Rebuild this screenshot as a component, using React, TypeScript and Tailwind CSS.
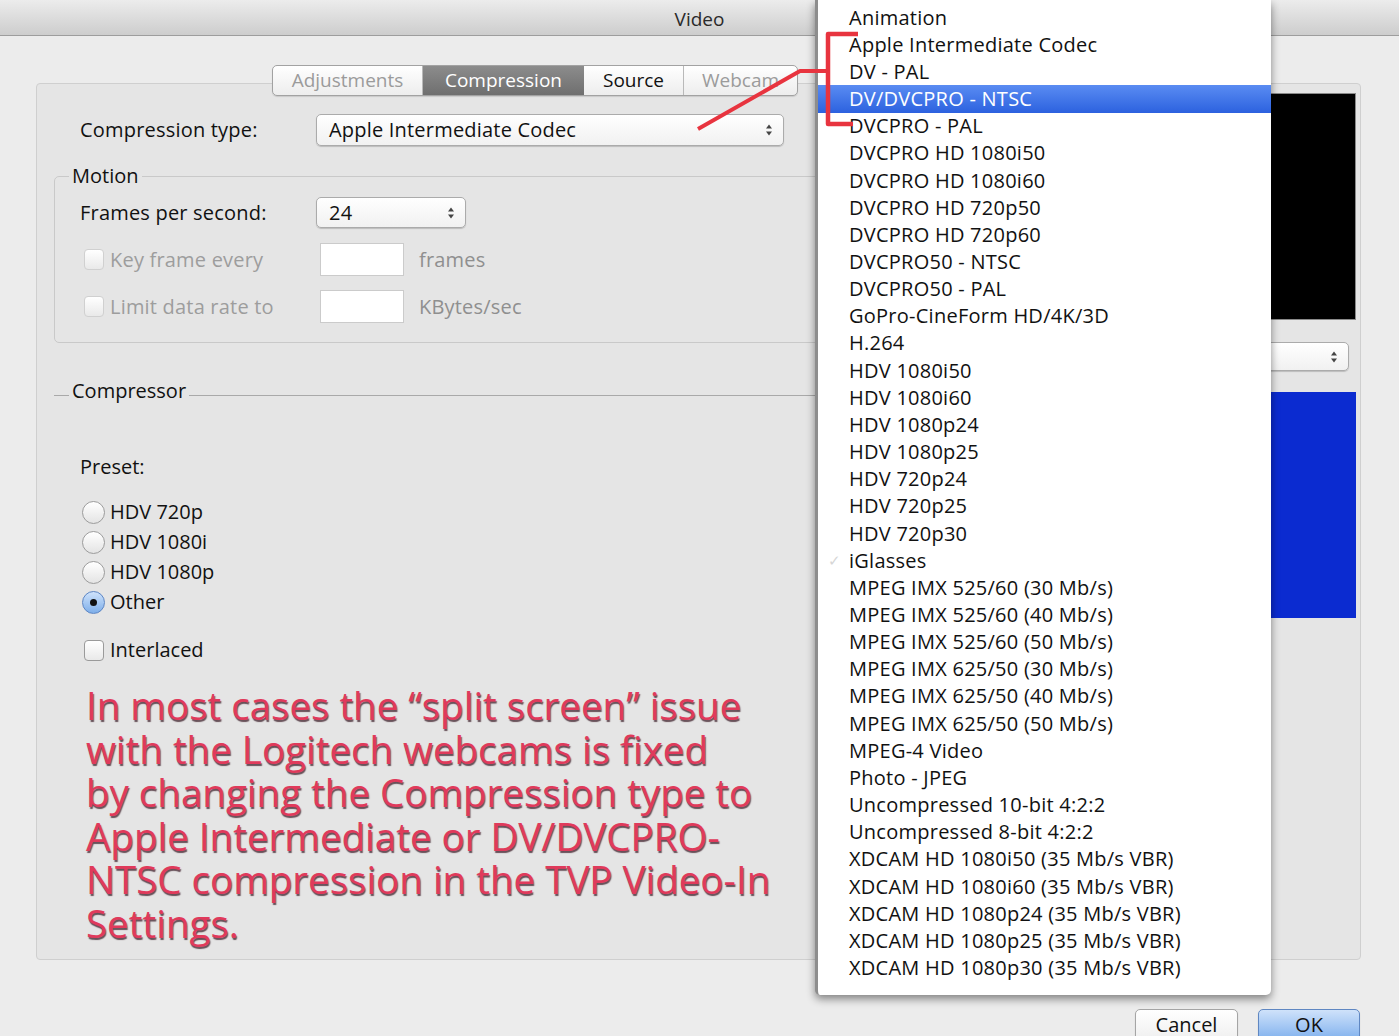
const codecs = [
  "Animation",
  "Apple Intermediate Codec",
  "DV - PAL",
  "DV/DVCPRO - NTSC",
  "DVCPRO - PAL",
  "DVCPRO HD 1080i50",
  "DVCPRO HD 1080i60",
  "DVCPRO HD 720p50",
  "DVCPRO HD 720p60",
  "DVCPRO50 - NTSC",
  "DVCPRO50 - PAL",
  "GoPro-CineForm HD/4K/3D",
  "H.264",
  "HDV 1080i50",
  "HDV 1080i60",
  "HDV 1080p24",
  "HDV 1080p25",
  "HDV 720p24",
  "HDV 720p25",
  "HDV 720p30",
  "iGlasses",
  "MPEG IMX 525/60 (30 Mb/s)",
  "MPEG IMX 525/60 (40 Mb/s)",
  "MPEG IMX 525/60 (50 Mb/s)",
  "MPEG IMX 625/50 (30 Mb/s)",
  "MPEG IMX 625/50 (40 Mb/s)",
  "MPEG IMX 625/50 (50 Mb/s)",
  "MPEG-4 Video",
  "Photo - JPEG",
  "Uncompressed 10-bit 4:2:2",
  "Uncompressed 8-bit 4:2:2",
  "XDCAM HD 1080i50 (35 Mb/s VBR)",
  "XDCAM HD 1080i60 (35 Mb/s VBR)",
  "XDCAM HD 1080p24 (35 Mb/s VBR)",
  "XDCAM HD 1080p25 (35 Mb/s VBR)",
  "XDCAM HD 1080p30 (35 Mb/s VBR)",
];

const presets = ["HDV 720p", "HDV 1080i", "HDV 1080p", "Other"];

function Arrows() {
  return (
    <svg width="8" height="14" viewBox="0 0 8 14">
      <path d="M4 1.5 L7 5.5 H1 Z M4 12.5 L7 8.5 H1 Z" fill="#444" />
    </svg>
  );
}

function Select({ value, className }: { value: string; className: string }) {
  return (
    <div
      className={`flex items-center justify-between rounded-[5px] border border-[#ababab] bg-linear-to-b from-white to-[#f1f1f1] pl-3 pr-[10px] text-[20px] tracking-[0.2px] text-[#111] shadow-[0_1px_1px_rgba(0,0,0,0.18)] ${className}`}
    >
      <span>{value}</span>
      <Arrows />
    </div>
  );
}

function Checkbox({ faded }: { faded?: boolean }) {
  return (
    <span
      className={`inline-block h-[21px] w-[20px] rounded-[4px] border bg-linear-to-b from-white to-[#e9e9e9] ${
        faded ? "border-[#d0d0d0]" : "border-[#9a9a9a]"
      }`}
    />
  );
}

function Radio({ on }: { on: boolean }) {
  if (on) {
    return (
      <span className="flex h-[23px] w-[23px] items-center justify-center rounded-full border border-[#5d86c4] bg-linear-to-b from-[#cfe3fb] to-[#7eaee9]">
        <span className="h-[7px] w-[7px] rounded-full bg-[#111]" />
      </span>
    );
  }
  return (
    <span className="inline-block h-[23px] w-[23px] rounded-full border border-[#9c9c9c] bg-linear-to-b from-white to-[#e4e4e4]" />
  );
}

export default function App() {
  return (
    <div className="relative h-[1036px] w-[1399px] overflow-hidden bg-[#ececec] font-['Open_Sans',sans-serif] text-[#111]">
      {/* title bar */}
      <div className="flex h-[36px] items-center justify-center border-b border-[#9d9d9d] bg-linear-to-b from-[#ececec] to-[#cdcdcd] pt-[3px] text-[19px] text-[#2a2a2a]">
        Video
      </div>

      {/* main panel */}
      <div className="ml-[36px] mt-[47px] flex h-[877px] w-[1325px] rounded-[4px] border border-[#cfcfcf] bg-[#e5e5e5]">
        <div className="flex w-[778px] shrink-0 flex-col">
          {/* tabs */}
          <div className="-mt-[19px] ml-[235px] flex h-[31px] w-[526px] overflow-hidden rounded-[5px] border border-[#a2a2a2] bg-linear-to-b from-white to-[#ededed] text-[19px] shadow-[0_1px_1px_rgba(0,0,0,0.12)]">
            <div className="flex w-[150px] items-center justify-center border-r border-[#b9b9b9] text-[#9b9b9b]">
              Adjustments
            </div>
            <div className="flex w-[161px] items-center justify-center bg-linear-to-b from-[#8c8c8c] to-[#6f6f6f] text-white">
              Compression
            </div>
            <div className="flex w-[100px] items-center justify-center border-r border-[#b9b9b9] text-[#111]">
              Source
            </div>
            <div className="flex flex-1 items-center justify-center text-[#9b9b9b]">
              Webcam
            </div>
          </div>

          {/* compression type */}
          <div className="mt-[18px] flex h-[32px] items-center">
            <div className="w-[279px] pl-[43px] text-[20px] tracking-[0.2px]">Compression type:</div>
            <Select value="Apple Intermediate Codec" className="h-[32px] w-[468px]" />
          </div>

          {/* motion */}
          <fieldset className="ml-[17px] mt-[18px] w-[790px] rounded-[5px] border border-[#c9c9c9] pb-[19px]">
            <legend className="ml-[14px] px-[3px] text-[20px] leading-[24px]">Motion</legend>
            <div className="mt-[9px] flex h-[31px] items-center">
              <div className="w-[261px] pl-[25px] text-[20px] tracking-[0.2px]">Frames per second:</div>
              <Select value="24" className="h-[31px] w-[150px]" />
            </div>
            <div className="mt-[15px] flex h-[33px] items-center text-[20px] tracking-[0.2px] text-[#9d9d9d]">
              <div className="flex w-[265px] items-center gap-[6px] pl-[29px]">
                <Checkbox faded />
                <span>Key frame every</span>
              </div>
              <div className="h-[33px] w-[84px] border border-[#cbcbcb] bg-white" />
              <span className="ml-[15px] text-[#8f8f8f]">frames</span>
            </div>
            <div className="mt-[14px] flex h-[33px] items-center text-[20px] tracking-[0.2px] text-[#9d9d9d]">
              <div className="flex w-[265px] items-center gap-[6px] pl-[29px]">
                <Checkbox faded />
                <span>Limit data rate to</span>
              </div>
              <div className="h-[33px] w-[84px] border border-[#cbcbcb] bg-white" />
              <span className="ml-[15px] text-[#8f8f8f]">KBytes/sec</span>
            </div>
          </fieldset>

          {/* compressor */}
          <fieldset className="ml-[17px] mt-[36px] w-[790px] border-0 border-t border-[#a9a9a9]">
            <legend className="ml-[15px] px-[3px] pb-[8px] text-[20px] leading-[24px]">Compressor</legend>
            <div className="mt-[44px] pl-[26px] text-[20px] leading-[24px]">Preset:</div>
            <div className="mt-[18px] flex flex-col pl-[28px]">
              {presets.map((p) => (
                <div key={p} className="flex h-[30px] items-center gap-[5px] text-[20px]">
                  <Radio on={p === "Other"} />
                  <span>{p}</span>
                </div>
              ))}
            </div>
            <div className="mt-[21px] flex h-[24px] items-center gap-[6px] pl-[30px] text-[20px]">
              <Checkbox />
              <span>Interlaced</span>
            </div>
            <p className="mt-[22px] pl-[32px] text-[38.5px] leading-[43.5px] text-[#e03a5b] [text-shadow:1px_2px_1px_rgba(60,30,40,0.75)]">
              In most cases the “split screen” issue
              <br />
              with the Logitech webcams is fixed
              <br />
              by changing the Compression type to
              <br />
              Apple Intermediate or DV/DVCPRO-
              <br />
              NTSC compression in the TVP Video-In
              <br />
              Settings.
            </p>
          </fieldset>
        </div>

        {/* right column, mostly hidden under the menu */}
        <div className="ml-[320px] flex flex-1 flex-col pr-[4px]">
          <div className="mt-[9px] h-[227px] border border-[#8a8a8a] bg-black" />
          <Select value="" className="mr-[7px] mt-[22px] h-[29px]" />
          <div className="mt-[21px] h-[226px] bg-[#0b2bd0] pl-[40px] pt-[29px] text-[19px] font-bold text-white">
            Selected
          </div>
        </div>
      </div>

      {/* buttons */}
      <div className="mt-[49px] flex justify-end gap-[20px] pr-[39px]">
        <div className="flex h-[38px] w-[103px] items-center justify-center rounded-[5px] border border-[#a5a5a5] bg-linear-to-b from-white to-[#ececec] pb-[6px] text-[20px] shadow-[0_1px_1px_rgba(0,0,0,0.2)]">
          Cancel
        </div>
        <div className="flex h-[38px] w-[102px] items-center justify-center rounded-[5px] border border-[#5f87c2] bg-linear-to-b from-[#cfe2fa] to-[#6fa6ea] pb-[6px] text-[20px] shadow-[0_1px_1px_rgba(0,0,0,0.2)]">
          OK
        </div>
      </div>

      {/* popup menu */}
      <div className="absolute left-[815px] top-0 h-[995px] w-[456px] rounded-b-[5px] border-l-[3px] border-[#8d8d8d] bg-white pt-[4px] shadow-[0_4px_8px_rgba(0,0,0,0.45)]">
        {codecs.map((c) => (
          <div
            key={c}
            className={`relative flex h-[27.17px] items-center pl-[31px] text-[20px] tracking-[0.25px] ${
              c === "DV/DVCPRO - NTSC"
                ? "bg-linear-to-b from-[#5a8cf2] to-[#2c61df] text-white"
                : "text-[#111]"
            }`}
          >
            {c === "iGlasses" && (
              <span className="absolute left-[10px] text-[15px] text-[#d6d6d6]">✓</span>
            )}
            {c}
          </div>
        ))}
      </div>

      {/* red annotation */}
      <svg
        className="pointer-events-none absolute left-0 top-0"
        width="1399"
        height="1036"
        viewBox="0 0 1399 1036"
      >
        <path
          d="M698 129 L800 71 L828 71"
          fill="none"
          stroke="#e8343f"
          strokeWidth="4"
          strokeLinejoin="round"
        />
        <path
          d="M858 34 L828 34 L828 124 L853 124"
          fill="none"
          stroke="#e8343f"
          strokeWidth="4.5"
          strokeLinejoin="round"
        />
      </svg>
    </div>
  );
}
